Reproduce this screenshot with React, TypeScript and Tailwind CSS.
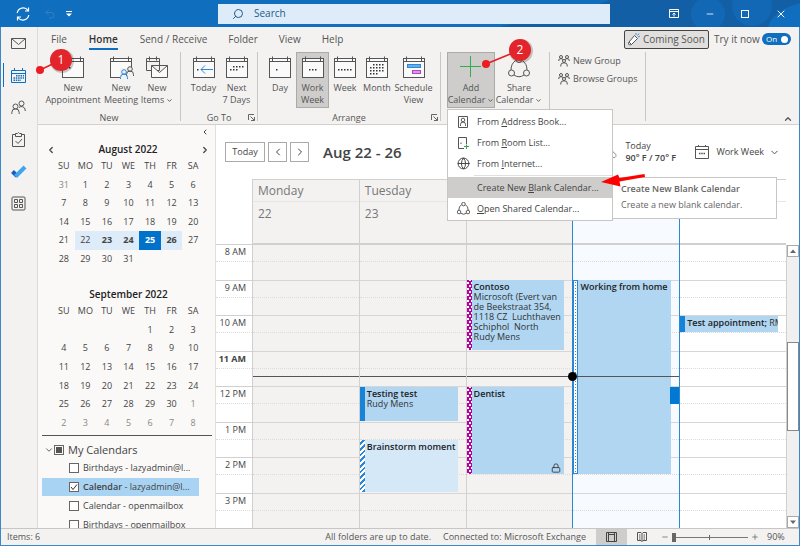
import React, { useState } from 'react';
import {
  ChevronDown,
  ChevronLeft,
  ChevronRight,
  ChevronUp,
  Globe,
  Lock,
  Minus,
  Plus,
  Search,
  Undo2,
  X,
} from 'lucide-react';

const tabs = ['File', 'Home', 'Send / Receive', 'Folder', 'View', 'Help'];

const weekDays = ['SU', 'MO', 'TU', 'WE', 'TH', 'FR', 'SA'];

const months = [
  {
    name: 'August 2022',
    height: 'h-[111px]',
    weeks: [
      [31, 1, 2, 3, 4, 5, 6],
      [7, 8, 9, 10, 11, 12, 13],
      [14, 15, 16, 17, 18, 19, 20],
      [21, 22, 23, 24, 25, 26, 27],
      [28, 29, 30, 31, 0, 0, 0],
    ],
  },
  {
    name: 'September 2022',
    height: 'h-[130px]',
    weeks: [
      [0, 0, 0, 0, 1, 2, 3],
      [4, 5, 6, 7, 8, 9, 10],
      [11, 12, 13, 14, 15, 16, 17],
      [18, 19, 20, 21, 22, 23, 24],
      [25, 26, 27, 28, 29, 30, 1],
      [2, 3, 4, 5, 6, 7, 8],
    ],
  },
];

const calendars = [
  { id: 'c1', name: 'Birthdays', account: 'lazyadmin@l...', on: false },
  { id: 'c2', name: 'Calendar', account: 'lazyadmin@l...', on: true },
  { id: 'c3', name: 'Calendar', account: 'openmailbox', on: false },
  { id: 'c4', name: 'Birthdays', account: 'openmailbox', on: false },
];

const hours = ['8 AM', '9 AM', '10 AM', '11 AM', '12 PM', '1 PM', '2 PM', '3 PM'];
const firstHour = 8;
const now = 11.7;

type CalEvent = {
  title: string;
  text?: string;
  start: number;
  end: number;
  kind: 'busy' | 'away' | 'tentative' | 'elsewhere' | 'strip';
  locked?: boolean;
};

const days: { name: string; date: string; today?: boolean; white?: boolean; events: CalEvent[] }[] = [
  { name: 'Monday', date: '22', events: [] },
  {
    name: 'Tuesday',
    date: '23',
    events: [
      { title: 'Testing test', text: 'Rudy Mens', start: 12, end: 13, kind: 'busy' },
      { title: 'Brainstorm moment', start: 13.5, end: 15, kind: 'tentative' },
    ],
  },
  {
    name: '',
    date: '',
    events: [
      {
        title: 'Contoso',
        text: 'Microsoft (Evert van\nde Beekstraat 354,\n1118 CZ  Luchthaven\nSchiphol  North\nRudy Mens',
        start: 9,
        end: 11,
        kind: 'away',
      },
      { title: 'Dentist', start: 12, end: 14.5, kind: 'away', locked: true },
    ],
  },
  {
    name: '',
    date: '',
    today: true,
    events: [
      { title: 'Working from home', start: 9, end: 14.5, kind: 'elsewhere' },
      { title: '', start: 12, end: 12.5, kind: 'strip' },
    ],
  },
  {
    name: '',
    date: '',
    white: true,
    events: [{ title: 'Test appointment;', text: 'RM', start: 10, end: 10.5, kind: 'busy' }],
  },
];

function classNames(...classes: any) {
  return classes.filter(Boolean).join(' ');
}

const percent = (h: number) => `${(h / hours.length) * 100}%`;

const CalIcon = ({ children }: { children?: React.ReactNode }) => (
  <svg width="22" height="22" viewBox="0 0 22 22" fill="none" stroke="#555" className="shrink-0 overflow-visible">
    <rect x="0.5" y="2.5" width="21" height="19" fill="#fafafa" />
    <path d="M0.5 5.5h21M3.5 0.5v5M18.5 0.5v5" />
    {children}
  </svg>
);

const Dots = ({ at }: { at: number[][] }) => (
  <>
    {at.map(([x, y]) => (
      <rect key={`${x}-${y}`} x={x} y={y} width="1.5" height="1.5" fill="#333" stroke="none" />
    ))}
  </>
);

const Person = ({ x, y, color }: { x: number; y: number; color: string }) => (
  <g stroke={color}>
    <circle cx={x} cy={y} r="2.3" fill="#f3f2f1" />
    <path d={`M${x - 3.5} ${y + 7}v-1.5a3.5 3.5 0 0 1 7 0v1.5`} />
  </g>
);

const GroupIcon = () => (
  <svg width="12" height="12" viewBox="0 0 12 12" fill="none" stroke="#555">
    <circle cx="3" cy="2" r="1.5" />
    <circle cx="9" cy="2" r="1.5" />
    <circle cx="6" cy="6" r="1.5" />
    <path d="M0.8 6V5q0-1.3 2.2-1.3T4.8 4.8M11.2 6V5q0-1.3-2.2-1.3T7.2 4.8M2.8 11.5V10q0-2.2 3.2-2.2T9.2 10v1.5" />
  </svg>
);

const ShareIcon = ({ size }: { size: number }) => (
  <svg width={size} height={size} viewBox="0 0 22 22" fill="none" stroke="#555" strokeWidth={size > 16 ? 1 : 1.6}>
    <circle cx="11" cy="3.5" r="3" />
    <circle cx="3.5" cy="17" r="3" />
    <circle cx="18.5" cy="17" r="3" />
    <path d="M7.8 4.5Q3 7.5 3 14M14.2 4.5Q19 7.5 19 14M6 19q5 3.5 10 0" />
  </svg>
);

const Launcher = () => (
  <button className="absolute right-[2px] bottom-0" aria-label="Options">
    <svg width="7" height="7" viewBox="0 0 7 7" fill="none" stroke="#666">
      <path d="M0.5 6V0.5H6M2.5 2.5l4 4M6.5 3v3.5H3" />
    </svg>
  </button>
);

type RibbonButtonProps = {
  width: string;
  lines: string[];
  icon: React.ReactNode;
  active?: boolean;
  menu?: boolean;
};

const RibbonButton = ({ width, lines, icon, active, menu }: RibbonButtonProps) => (
  <button
    className={classNames(
      width,
      'h-14 shrink-0 flex flex-col items-center border pt-[3px] leading-3 whitespace-nowrap',
      active ? 'bg-[#cfcdcb] border-[#acaaa8]' : 'border-transparent'
    )}
  >
    {icon}
    <span className="mt-1">{lines[0]}</span>
    {lines[1] && (
      <span className="flex items-center">
        {lines[1]}
        {menu && <ChevronDown className="ml-0.5 w-[7px] h-[7px] stroke-3" />}
      </span>
    )}
  </button>
);

type GroupProps = { width: string; pad?: string; label?: string; launcher?: boolean; children: React.ReactNode };

const RibbonGroup = ({ width, pad = 'pl-[6px]', label, launcher, children }: GroupProps) => (
  <div className={classNames(width, 'relative shrink-0 h-[69px] border-r border-[#c8c6c4]')}>
    <div className={classNames(pad, 'flex')}>{children}</div>
    {label && <p className="mt-1 text-center leading-3">{label}</p>}
    {launcher && <Launcher />}
  </div>
);

const TitleBar = () => (
  <header className="relative h-[27px] shrink-0 bg-[#106ebe] flex items-center text-white">
    <svg className="absolute right-0 top-0 h-[27px] w-[300px]" viewBox="0 0 300 27" preserveAspectRatio="none">
      <path d="M0 27Q10 22 40 24L110 0H300V27Z" fill="#135fa5" />
      <path d="M90 27q-10-16-30-27h28q-8 12 2 27Z" fill="#106ebe" />
      <circle cx="208" cy="14" r="17" fill="#1268b4" />
      <circle cx="252" cy="6" r="20" fill="#1268b4" />
      <path d="M268 27q4-16 32-24v24z" fill="#106ebe" />
    </svg>
    <div className="relative flex-1 flex items-center gap-[14px] pl-4">
      <button aria-label="Send and receive">
        <svg width="14" height="14" viewBox="0 0 14 14" fill="none" stroke="#fff" strokeWidth="1.2">
          <path d="M1.2 6A6 6 0 0 1 12 3.5M12.5 0.5v3.5H9M12.8 8A6 6 0 0 1 2 10.5M1.5 13.5V10H5" />
        </svg>
      </button>
      <button aria-label="Undo">
        <Undo2 className="w-3 h-3 text-[#3480c6]" />
      </button>
      <button aria-label="Customize toolbar" className="-ml-1">
        <svg width="6" height="6" viewBox="0 0 6 6">
          <path d="M0 0h6v1H0zM0 2.5h6L3 5.5z" fill="#fff" />
        </svg>
      </button>
    </div>
    <label className="relative w-[49%] h-5 bg-[#deecf9] flex items-center pl-[14px] text-[#1b5a92]">
      <Search className="w-3 h-3 -scale-x-100" />
      <input
        aria-label="Search"
        placeholder="Search"
        className="ml-[10px] flex-1 bg-transparent text-[10px] outline-none placeholder:text-[#1b5a92]"
      />
    </label>
    <div className="relative w-[190px] flex items-center justify-end gap-[26px] pr-[13px]">
      <button aria-label="Ribbon display">
        <svg width="10" height="9" viewBox="0 0 10 9" fill="none" stroke="#fff">
          <path d="M0.5 0.5h9v8h-9zM0.5 2.5h9M5 7.5V4M3.5 5.5L5 4l1.5 1.5" />
        </svg>
      </button>
      <button aria-label="Minimize">
        <Minus className="w-[10px] h-[10px]" />
      </button>
      <button aria-label="Maximize">
        <svg width="8" height="8" viewBox="0 0 8 8" fill="none" stroke="#fff">
          <rect x="0.5" y="0.5" width="7" height="7" />
        </svg>
      </button>
      <button aria-label="Close">
        <X className="w-3 h-3" />
      </button>
    </div>
  </header>
);

const RailItem = ({ label, active, children }: { label: string; active?: boolean; children: React.ReactNode }) => (
  <button
    aria-label={label}
    className={classNames(
      'relative w-full h-8 flex items-center justify-center pr-[2px]',
      active ? 'text-[#106ebe]' : 'text-[#555]'
    )}
  >
    {active && <span className="absolute left-[2px] top-1 h-6 w-px bg-[#106ebe]"></span>}
    <svg width="15" height="15" viewBox="0 0 15 15" fill="none" stroke="currentColor" className="overflow-visible">
      {children}
    </svg>
  </button>
);

const Rail = () => (
  <nav className="w-[37px] shrink-0 border-r border-[#dddbd9] bg-[#f3f2f1]">
    <RailItem label="Mail">
      <path d="M0.5 2.5h14v10h-14zM0.5 2.5l7 6 7-6" />
    </RailItem>
    <RailItem label="Calendar" active>
      <path d="M0.5 2.5h14v12h-14zM0.5 5.5h14M3.5 0v3M11.5 0v3" />
      <path d="M5 7.8h8M2.5 10h10.5M2.5 12.2h7.5" strokeWidth="1.5" strokeDasharray="1.5 0.8" />
    </RailItem>
    <RailItem label="People">
      <circle cx="4.5" cy="6.5" r="2.5" />
      <circle cx="10.5" cy="3.5" r="2.5" />
      <path d="M0.8 14v-1.5a3.7 3.7 0 0 1 7.4 0V14M8 7.5a3.7 3.7 0 0 1 6.2 2.5V11" />
    </RailItem>
    <RailItem label="Tasks">
      <path d="M4.5 2.5h-3v12h12v-12h-3M4.5 1.5h2q1-2 2 0h2v3h-6zM4.5 9l2.5 2.5 4-4.5" />
    </RailItem>
    <RailItem label="To Do">
      <path d="M1.5 7.5l4.5 4.5" stroke="#185abd" strokeWidth="4" />
      <path d="M4.5 12.5L14 3" stroke="#41a5ee" strokeWidth="4" />
    </RailItem>
    <RailItem label="More apps">
      <rect x="1" y="1" width="13" height="13" rx="1" />
      <path d="M3.5 3.5h3v3h-3zM8.5 3.5h3v3h-3zM3.5 8.5h3v3h-3zM8.5 8.5h3v3h-3z" />
    </RailItem>
  </nav>
);

const Ribbon = () => {
  const [tryNew, setTryNew] = useState(true);

  return (
    <div className="relative shrink-0 h-[98px] bg-[#f3f2f1] border-b border-[#d2d0ce] text-[#555]">
      <div className="flex items-center h-6 pl-[13px] pr-2">
        <div className="flex gap-[21px] flex-1 text-[10px] whitespace-nowrap">
          {tabs.map((tab) => (
            <button
              key={tab}
              className={classNames(
                'h-[21px] leading-[20px] border-b-2',
                tab === 'Home' ? 'mx-px font-semibold text-[#333] border-[#106ebe]' : 'border-transparent'
              )}
            >
              {tab}
            </button>
          ))}
        </div>
        <button className="flex items-center h-[19px] w-[85px] justify-center gap-[3px] rounded-xs border border-[#444] bg-[#e1dfdd] text-[10px] whitespace-nowrap">
          <svg width="12" height="13" viewBox="0 0 12 13" fill="none" stroke="#555">
            <path d="M1 9L6.5 2.5l3 3L3.5 11.5zM1 9l-.5 2 1 1 2-.5" fill="#fff" />
            <path d="M8 2V0M10 4l2-1M9.5 2.5l1.5-2" stroke="#3a96dd" />
          </svg>
          Coming Soon
        </button>
        <span className="ml-[5px] w-12 text-[10px] whitespace-nowrap">Try it now</span>
        <button
          role="switch"
          aria-checked={tryNew}
          aria-label="Try it now"
          onClick={() => setTryNew(!tryNew)}
          className="flex items-center justify-between w-[29px] h-3 rounded-full bg-[#106ebe] pl-1 pr-[3px] text-[8px] leading-3 text-white"
        >
          {tryNew ? 'On' : 'Off'}
          <span className="w-[7px] h-[7px] rounded-full bg-white"></span>
        </button>
      </div>

      <div className="flex pt-px">
        <RibbonGroup width="w-[143px]" pad="pl-[5px]" label="New">
          <RibbonButton
            width="w-[60px]"
            lines={['New', 'Appointment']}
            icon={
              <CalIcon>
                <Dots at={[[7, 11]]} />
              </CalIcon>
            }
          />
          <RibbonButton
            width="w-9"
            lines={['New', 'Meeting']}
            icon={
              <CalIcon>
                <path d="M10 12h12v11H10z" fill="#f3f2f1" stroke="none" />
                <Person x={20} y={13} color="#555" />
                <Person x={14} y={16} color="#2b88d8" />
              </CalIcon>
            }
          />
          <RibbonButton
            width="w-9"
            lines={['New', 'Items']}
            menu
            icon={
              <svg width="22" height="22" viewBox="0 0 22 22" fill="none" stroke="#555">
                <path d="M0.5 2.5h13v12h-13zM0.5 5.5h13M3.5 0.5v4M10.5 0.5v4" />
                <path d="M5.5 9.5h16v12h-16zM5.5 9.5l8 7 8-7" fill="#fafafa" />
              </svg>
            }
          />
        </RibbonGroup>
        <RibbonGroup width="w-[77px]" label="Go To" launcher>
          <RibbonButton
            width="w-[33px]"
            lines={['Today']}
            icon={
              <CalIcon>
                <path d="M20 13.5H8M12 9.5l-4 4 4 4" stroke="#2b88d8" />
                <Dots at={[[4, 13]]} />
              </CalIcon>
            }
          />
          <RibbonButton
            width="w-[33px]"
            lines={['Next', '7 Days']}
            icon={
              <CalIcon>
                <Dots at={[[7, 10], [10, 10], [13, 10], [16, 10], [4, 13], [7, 13], [10, 13]]} />
              </CalIcon>
            }
          />
        </RibbonGroup>
        <RibbonGroup width="w-[183px]" label="Arrange" launcher>
          <RibbonButton
            width="w-8"
            lines={['Day']}
            icon={
              <CalIcon>
                <Dots at={[[7, 13]]} />
              </CalIcon>
            }
          />
          <RibbonButton
            width="w-[33px]"
            lines={['Work', 'Week']}
            active
            icon={
              <CalIcon>
                <Dots at={[[7, 13], [10, 13], [13, 13]]} />
              </CalIcon>
            }
          />
          <RibbonButton
            width="w-8"
            lines={['Week']}
            icon={
              <CalIcon>
                <Dots at={[[4, 13], [7, 13], [10, 13], [13, 13], [16, 13]]} />
              </CalIcon>
            }
          />
          <RibbonButton
            width="w-8"
            lines={['Month']}
            icon={
              <CalIcon>
                <Dots
                  at={[8, 11, 14, 17]
                    .map((y) => [4, 7, 10, 13, 16].map((x) => [x, y]))
                    .flat()
                    .slice(1, 18)}
                />
              </CalIcon>
            }
          />
          <RibbonButton
            width="w-[41px]"
            lines={['Schedule', 'View']}
            icon={
              <CalIcon>
                <rect x="4.5" y="8.5" width="13" height="3" fill="#69afe5" stroke="#2b88d8" />
                <rect x="9.5" y="14.5" width="8" height="3" fill="#d59dd9" stroke="#b146c2" />
              </CalIcon>
            }
          />
        </RibbonGroup>
        <RibbonGroup width="w-[109px]">
          <div className="relative">
            <RibbonButton
              width="w-12"
              lines={['Add', 'Calendar']}
              active
              menu
              icon={
                <svg width="22" height="22" viewBox="0 0 22 22" fill="#2fae4e">
                  <rect x="10" y="0" width="1" height="21" />
                  <rect x="0" y="10" width="21" height="1" />
                </svg>
              }
            />
            <AddMenu />
          </div>
          <RibbonButton width="w-12" lines={['Share', 'Calendar']} menu icon={<ShareIcon size={22} />} />
        </RibbonGroup>
        <RibbonGroup width="w-24" pad="pl-2">
          <div className="flex flex-col gap-[6px] pt-[3px] leading-3">
            <button className="flex items-center gap-[3px] whitespace-nowrap">
              <GroupIcon />
              New Group
            </button>
            <button className="flex items-center gap-[3px] whitespace-nowrap">
              <GroupIcon />
              Browse Groups
            </button>
          </div>
        </RibbonGroup>
      </div>
      <button aria-label="Collapse the ribbon" className="absolute right-[6px] bottom-0">
        <ChevronUp className="w-[10px] h-[10px] stroke-3" />
      </button>
    </div>
  );
};

const MenuItem = ({ icon, label, hot, active }: { icon?: React.ReactNode; label: string; hot: number; active?: boolean }) => (
  <button
    role="menuitem"
    className={classNames('flex items-center w-full h-[21px] pl-[9px] text-left', active && 'bg-[#cfcdcb]')}
  >
    <span className="w-[20px] flex">{icon}</span>
    <span className="whitespace-pre">
      {label.slice(0, hot)}
      <u>{label[hot]}</u>
      {label.slice(hot + 1)}
    </span>
  </button>
);

/* Drop-down of Add Calendar */
const AddMenu = () => (
  <div
    role="menu"
    className="absolute left-0 top-[57px] z-20 w-[166px] border border-[#c8c6c4] bg-white py-px text-[#444]"
  >
    <MenuItem
      label="From Address Book..."
      hot={5}
      icon={
        <svg width="12" height="12" viewBox="0 0 12 12" fill="none" stroke="#555">
          <path d="M1.5 0.5h9v11h-9z" />
          <circle cx="6" cy="4" r="1.8" />
          <path d="M3.5 10V8.5a2.5 2.5 0 0 1 5 0V10" />
        </svg>
      }
    />
    <MenuItem
      label="From Room List..."
      hot={5}
      icon={
        <svg width="12" height="12" viewBox="0 0 12 12" fill="none" stroke="#555">
          <path d="M7 11.5H1.5V0.5h8V7M4 5.5v1.5" />
          <path d="M9.5 7.5v4.5M7 9.5h5" stroke="#35a853" />
        </svg>
      }
    />
    <MenuItem label="From Internet..." hot={5} icon={<Globe className="w-[13px] h-[13px]" strokeWidth={1.8} />} />
    <hr className="ml-[26px] my-px border-[#e1dfdd]" />
    <MenuItem label="Create New Blank Calendar..." hot={11} active />
    <MenuItem label="Open Shared Calendar..." hot={0} icon={<ShareIcon size={13} />} />

    <div
      role="tooltip"
      className="absolute left-[164px] top-[67px] w-[165px] h-[42px] border border-[#c8c6c4] bg-white pl-2 pt-[5px] text-[#666]"
    >
      <p className="font-semibold leading-3 whitespace-nowrap">Create New Blank Calendar</p>
      <p className="mt-1 leading-3">Create a new blank calendar.</p>
    </div>
  </div>
);

const MonthTable = ({ month }: { month: (typeof months)[0] }) => {
  const august = month.name === 'August 2022';
  return (
    <table className={classNames('w-full table-fixed text-center', month.height)}>
      <tbody>
        <tr className="h-[18px]">
          {weekDays.map((d) => (
            <th key={d} scope="col" className="font-normal p-0">
              {d}
            </th>
          ))}
        </tr>
        {month.weeks.map((week, w) => (
          <tr key={w} className="h-[18px]">
            {week.map((d, i) => {
              const other = (w === 0 && d > 20) || (w > 3 && d > 0 && d < 20);
              const shown = august && w === 3 && d > 21 && d < 27;
              return (
                <td
                  key={i}
                  className={classNames(
                    'p-0',
                    other && 'text-[#8a8886]',
                    shown && (d === 25 ? 'bg-[#0072c9] text-white' : 'bg-[#deecf9]'),
                    shown && d !== 22 && 'font-bold'
                  )}
                >
                  {d || ''}
                </td>
              );
            })}
          </tr>
        ))}
      </tbody>
    </table>
  );
};

const Sidebar = () => (
  <aside className="relative w-[178px] shrink-0 overflow-hidden bg-[#faf9f8] border-r border-[#e1dfdd] text-[#444] leading-3">
    <button aria-label="Collapse folder pane" className="absolute right-[6px] top-[3px]">
      <ChevronLeft className="w-2 h-2 stroke-3" />
    </button>
    <div className="flex items-center justify-between pl-2 pr-[5px] pt-[17px]">
      <button aria-label="Previous month">
        <ChevronLeft className="w-[10px] h-[10px] stroke-3" />
      </button>
      <h2 className="font-semibold text-[10px] leading-[15px] text-[#222]">{months[0].name}</h2>
      <button aria-label="Next month">
        <ChevronRight className="w-[10px] h-[10px] stroke-3" />
      </button>
    </div>
    <div className="pl-[15px] pr-[11px]">
      <MonthTable month={months[0]} />
      <h2 className="pt-[19px] text-center font-semibold text-[10px] leading-[15px] text-[#222]">{months[1].name}</h2>
      <MonthTable month={months[1]} />
    </div>
    <div className="ml-1 mr-[3px] mt-[3px] border-t border-[#555]">
      <div className="flex items-center pt-[5px] pl-[2px] h-[22px]">
        <ChevronDown className="w-[10px] h-[10px]" />
        <input
          type="checkbox"
          id="all"
          className="appearance-none w-[10px] h-[10px] border border-[#666] bg-[#555] bg-clip-content p-[1px]"
        />
        <label htmlFor="all" className="ml-1 text-[11px] leading-4">
          My Calendars
        </label>
      </div>
      <ul className="pt-px">
        {calendars.map((c) => (
          <li
            key={c.id}
            className={classNames('relative flex items-center h-[18px] mb-px mr-[13px] pl-[27px]', c.on && 'bg-[#a8d3f3]')}
          >
            <input
              type="checkbox"
              id={c.id}
              defaultChecked={c.on}
              className="peer appearance-none w-[10px] h-[10px] border border-[#666] bg-white"
            />
            <svg
              className="pointer-events-none absolute left-7 hidden peer-checked:block"
              width="8"
              height="8"
              viewBox="0 0 8 8"
              fill="none"
              stroke="#333"
            >
              <path d="M1 4l2 2.5L7 1.5" />
            </svg>
            <label htmlFor={c.id} className="ml-1 whitespace-nowrap">
              <span className={classNames(c.on && 'font-semibold')}>{c.name}</span> - {c.account}
            </label>
          </li>
        ))}
      </ul>
    </div>
  </aside>
);

const strips = {
  busy: 'bg-[#1683d8]',
  away: 'bg-[#b4009e] bg-[radial-gradient(#fff_0.9px,transparent_1.1px),radial-gradient(#fff_0.9px,transparent_1.1px)] bg-[size:4px_6px] bg-[position:-1px_0,1px_3px]',
  tentative: 'bg-[repeating-linear-gradient(135deg,#fff_0_2px,#2b88d8_2px_4px)]',
  elsewhere: 'bg-white border border-[#2b88d8] bg-[radial-gradient(#777_0.6px,transparent_0.9px)] bg-[size:3px_3px]',
  strip: '',
};

const EventBox = ({ event }: { event: CalEvent }) => {
  const style = {
    top: percent(event.start - firstHour),
    height: percent(event.end - event.start),
  };
  if (event.kind === 'strip') {
    return <div style={style} className="absolute right-0 w-[9px] bg-[#0078d4]"></div>;
  }
  const oneLine = event.end - event.start < 1;
  return (
    <div style={style} className="absolute left-0 right-2 flex pb-px text-[#333]">
      <div className={classNames('w-[5px] shrink-0', strips[event.kind])}></div>
      <div
        className={classNames(
          'relative flex-1 min-w-0 overflow-hidden pl-[2px] pt-[2px] leading-[10px] whitespace-pre',
          event.kind === 'tentative' ? 'bg-[#d5e8f8]' : 'bg-[#b0d6f2]'
        )}
      >
        <b className="font-semibold text-[#222]">{event.title}</b>
        {event.text && (oneLine ? <span> {event.text}</span> : <p>{event.text}</p>)}
        {event.locked && <Lock className="absolute right-[3px] bottom-[1px] w-[10px] h-[10px]" />}
      </div>
    </div>
  );
};

const ScrollArrow = ({ path, label }: { path: string; label: string }) => (
  <button aria-label={label} className="h-3 shrink-0 border border-[#acaaa8] bg-white flex items-center justify-center">
    <svg width="6" height="5" viewBox="0 0 6 5">
      <path d={path} fill="#666" />
    </svg>
  </button>
);

const CalendarView = () => (
  <main className="flex-1 min-w-0 flex flex-col bg-white text-[#444]">
    <div className="flex items-center h-[54px] shrink-0 pl-[9px] pr-[19px]">
      <button className="h-5 w-10 border border-[#acaaa8]">Today</button>
      <button aria-label="Back" className="ml-[3px] h-5 w-[19px] border border-[#acaaa8] flex items-center justify-center">
        <ChevronLeft className="w-3 h-3" />
      </button>
      <button aria-label="Forward" className="ml-[3px] h-5 w-[19px] border border-[#acaaa8] flex items-center justify-center">
        <ChevronRight className="w-3 h-3" />
      </button>
      <h1 className="ml-[14px] flex-1 text-[15px] font-semibold whitespace-nowrap">Aug 22 - 26</h1>
      <svg width="20" height="14" viewBox="0 0 20 14">
        <circle cx="10" cy="6" r="5" fill="#fcc419" />
        <path d="M4 12.5h13a2.5 2.5 0 0 0-1-4.5 4 4 0 0 0-7-1z" fill="#fff" stroke="#999" />
      </svg>
      <div className="ml-[7px] w-[70px] leading-3 whitespace-nowrap">
        <p>Today</p>
        <p className="font-semibold">90° F / 70° F</p>
      </div>
      <button className="flex items-center whitespace-nowrap">
        <svg width="14" height="14" viewBox="0 0 14 14" fill="none" stroke="#555">
          <path d="M0.5 1.5h13v12h-13zM0.5 4.5h13M3.5 0v2M10.5 0v2" />
          <path d="M4 8.5h6" strokeWidth="1.5" strokeDasharray="1.5 0.75" />
        </svg>
        <span className="ml-[7px]">Work Week</span>
        <ChevronDown className="ml-[5px] w-[11px] h-[11px]" />
      </button>
    </div>

    <div className="flex-1 min-h-0 flex">
      <div className="w-9 shrink-0 flex flex-col pt-[65px]">
        {hours.map((hour, i) => (
          <div key={hour} className="flex-1 flex flex-col border-t border-[#d2d0ce] text-right">
            <div
              className={classNames(
                'h-1/2 pr-[6px] border-b border-dotted border-[#dddbd9] leading-[13px] whitespace-nowrap',
                i === 3 && 'font-bold'
              )}
            >
              {hour}
            </div>
          </div>
        ))}
      </div>

      <div className="relative flex-1 min-w-0 grid grid-cols-5">
        {days.map((day, n) => (
          <section
            key={n}
            className={classNames(
              'min-w-0 flex flex-col border-l',
              day.today ? 'bg-[#f7fbff] border-[#2b88d8]' : day.white ? 'bg-white border-[#2b88d8]' : 'bg-[#f3f2f1] border-[#d2d0ce]'
            )}
          >
            <div className="h-[66px] shrink-0 border-t border-b-2 border-[#d2d0ce] text-[12px] text-[#777]">
              <h3 className="h-[22px] border-b border-[#e8e6e4] pl-[5px] leading-[22px]">{day.name}</h3>
              <p className="pl-[5px] pt-[3px] leading-[18px]">{day.date}</p>
            </div>
            <div className="relative flex-1 min-h-0 flex flex-col">
              {hours.map((hour, i) => (
                <div key={hour} className={classNames('flex-1', i > 0 && 'border-t border-[#d8d6d4]')}>
                  <div className="h-1/2 border-b border-dotted border-[#dddbd9]"></div>
                </div>
              ))}
              {day.events.map((event) => (
                <EventBox key={event.start + event.kind} event={event} />
              ))}
              {!day.white && (
                <div style={{ top: percent(now - firstHour) }} className="absolute left-0 right-0 z-10 h-px bg-[#555]">
                  {day.today && <span className="absolute -left-[5px] -top-1 w-[9px] h-[9px] rounded-full bg-black"></span>}
                </div>
              )}
            </div>
          </section>
        ))}
      </div>

      {/* scroll bar */}
      <div className="w-[13px] shrink-0 flex flex-col pt-[66px]">
        <div className="flex-1 flex flex-col bg-[#f0f0f0] border-l border-[#d2d0ce]">
          <ScrollArrow path="M0 4h6L3 0.5z" label="Scroll up" />
          <div className="flex-[85]"></div>
          <div className="flex-[87] border border-[#8a8886] bg-white"></div>
          <div className="flex-[85]"></div>
          <ScrollArrow path="M0 0.5h6L3 4z" label="Scroll down" />
        </div>
      </div>
    </div>
  </main>
);

const StatusBar = () => (
  <footer className="h-[17px] shrink-0 flex items-center bg-[#f3f2f1] border-t border-[#c8c6c4] pl-[6px] pr-[14px] text-[#555] whitespace-nowrap">
    <span className="flex-1">Items: 6</span>
    <span>All folders are up to date.</span>
    <span className="ml-3">Connected to: Microsoft Exchange</span>
    <button aria-label="Normal view" className="ml-[10px] w-[31px] h-4 bg-[#cfcdcb] flex items-center justify-center">
      <svg width="11" height="10" viewBox="0 0 11 10" fill="none" stroke="#444">
        <path d="M0.5 0.5h10v9h-10zM2.5 0.5v9M8.5 0.5v9M2.5 2.5h6" />
      </svg>
    </button>
    <button aria-label="Reading view" className="ml-[10px]">
      <svg width="10" height="10" viewBox="0 0 10 10" fill="none" stroke="#555">
        <path d="M0.5 0.5h3.5l1 1 1-1h3.5v8H6l-1 1-1-1H0.5zM5 1.5v8M2 3h1.5M2 5h1.5M2 7h1.5M6.5 3h1.5M6.5 5h1.5M6.5 7h1.5" />
      </svg>
    </button>
    <button aria-label="Zoom out" className="ml-[14px]">
      <Minus className="w-2 h-2" />
    </button>
    <label className="relative ml-[3px] flex items-center">
      <span className="absolute left-[37px] h-[5px] w-px bg-[#666]"></span>
      <input
        type="range"
        aria-label="Zoom"
        min="90"
        max="200"
        defaultValue="90"
        className="w-[76px] h-[10px] appearance-none bg-transparent [&::-webkit-slider-runnable-track]:h-px [&::-webkit-slider-runnable-track]:bg-[#777] [&::-webkit-slider-thumb]:appearance-none [&::-webkit-slider-thumb]:-mt-1 [&::-webkit-slider-thumb]:h-[9px] [&::-webkit-slider-thumb]:w-1 [&::-webkit-slider-thumb]:bg-[#666]"
      />
    </label>
    <button aria-label="Zoom in" className="ml-[3px]">
      <Plus className="w-2 h-2" />
    </button>
    <span className="ml-2 w-[18px]">90%</span>
  </footer>
);

/* Numbered steps and the arrow, drawn over the window */
const Callouts = () => (
  <div className="pointer-events-none absolute left-0 top-0 z-30 text-[12px] text-white">
    <svg className="absolute left-0 top-0" width="680" height="200" fill="#ec1c24">
      <g stroke="#ec1c24" strokeWidth="1.5">
        <path d="M40 70L61 60M486 64L520 50" />
      </g>
      <circle cx="40" cy="70" r="4" />
      <circle cx="486" cy="64" r="4" />
      <circle cx="62" cy="61" r="12" fill="#000" fillOpacity="0.2" />
      <circle cx="521" cy="51" r="12" fill="#000" fillOpacity="0.2" />
      <circle cx="61" cy="60" r="11" fill="#e3242b" />
      <circle cx="520" cy="50" r="11" fill="#e3242b" />
      <path d="M601 182L618 174.5L619.5 178L644.5 174L645 177L619.5 181.5L620.5 186.5Z" fill="#f00" />
    </svg>
    <span className="absolute left-[50px] top-[50px] w-[22px] text-center leading-5">1</span>
    <span className="absolute left-[509px] top-10 w-[22px] text-center leading-5">2</span>
  </div>
);

const App = () => {
  return (
    <div className="relative h-screen overflow-hidden flex flex-col font-['Open_Sans','Noto_Sans',sans-serif] text-[9px]">
      <TitleBar />
      <div className="flex-1 min-h-0 flex flex-col border border-t-0 border-[#3a87cc]">
        <div className="flex-1 min-h-0 flex">
          <Rail />
          <div className="flex-1 min-w-0 flex flex-col">
            <Ribbon />
            <div className="flex-1 min-h-0 flex">
              <Sidebar />
              <CalendarView />
            </div>
          </div>
        </div>
        <StatusBar />
      </div>
      <Callouts />
    </div>
  );
};

export default App;
